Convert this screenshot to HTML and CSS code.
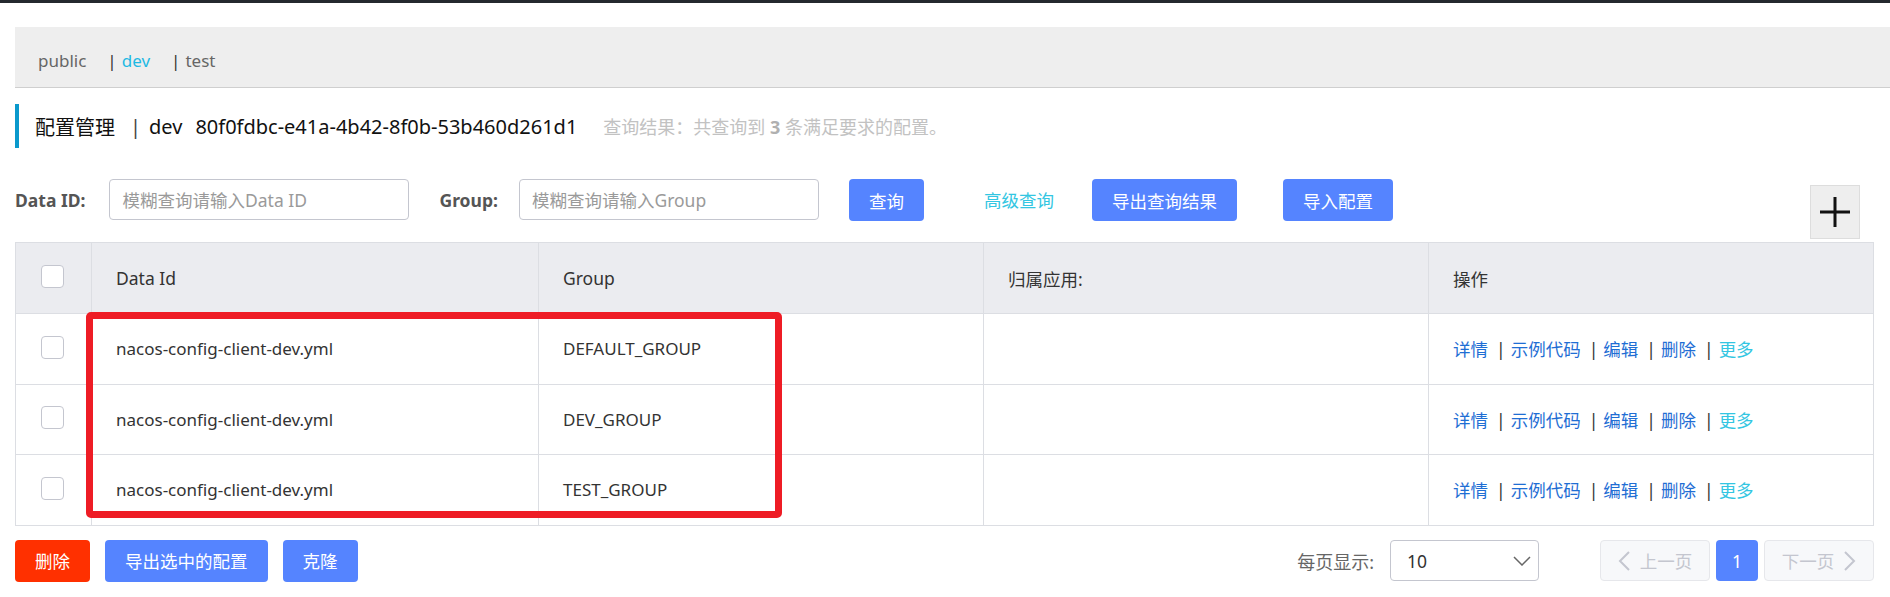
FILE: index.html
```html
<!DOCTYPE html>
<html lang="zh-CN">
<head>
<meta charset="utf-8">
<title>配置管理</title>
<link rel="stylesheet" href="styles.css">
</head>
<body>
<div class="topbar"></div>
<div class="page">
  <div class="ns-bar">
    <span class="ns">public</span>
    <span class="ns"><span class="ns-sep">|</span><span class="ns-active">dev</span></span>
    <span class="ns"><span class="ns-sep">|</span>test</span>
  </div>
  <div class="content">
    <div class="title">
      <span class="title-main">配置管理</span>
      <span class="title-sep">|</span>
      <span class="title-ns">dev</span>
      <span class="title-id">80f0fdbc-e41a-4b42-8f0b-53b460d261d1</span>
      <span class="result">查询结果：共查询到 <strong>3</strong> 条满足要求的配置。</span>
    </div>

    <div class="search">
      <div class="field">
        <label class="field-label">Data ID:</label>
        <input class="input" type="text" placeholder="模糊查询请输入Data ID">
      </div>
      <div class="field field-group">
        <label class="field-label">Group:</label>
        <input class="input" type="text" placeholder="模糊查询请输入Group">
      </div>
      <button class="btn btn-primary btn-query">查询</button>
      <a class="adv-link">高级查询</a>
      <button class="btn btn-primary btn-export">导出查询结果</button>
      <button class="btn btn-primary btn-import">导入配置</button>
      <button class="plus-btn" aria-label="新建配置">
        <svg width="30" height="30" viewBox="0 0 30 30"><path d="M0 15H30M15 0V30" stroke="#111" stroke-width="3" fill="none"/></svg>
      </button>
    </div>

    <div class="table-wrap">
      <table class="grid">
        <colgroup>
          <col class="c-check"><col class="c-id"><col class="c-group"><col class="c-app"><col>
        </colgroup>
        <thead>
          <tr>
            <th class="check-cell"><span class="checkbox"></span></th>
            <th>Data Id</th>
            <th>Group</th>
            <th>归属应用:</th>
            <th>操作</th>
          </tr>
        </thead>
        <tbody>
          <tr>
            <td class="check-cell"><span class="checkbox"></span></td>
            <td>nacos-config-client-dev.yml</td>
            <td>DEFAULT_GROUP</td>
            <td></td>
            <td class="ops"><a class="op">详情</a><span class="op-sep">|</span><a class="op">示例代码</a><span class="op-sep">|</span><a class="op">编辑</a><span class="op-sep">|</span><a class="op">删除</a><span class="op-sep">|</span><a class="op op-more">更多</a></td>
          </tr>
          <tr>
            <td class="check-cell"><span class="checkbox"></span></td>
            <td>nacos-config-client-dev.yml</td>
            <td>DEV_GROUP</td>
            <td></td>
            <td class="ops"><a class="op">详情</a><span class="op-sep">|</span><a class="op">示例代码</a><span class="op-sep">|</span><a class="op">编辑</a><span class="op-sep">|</span><a class="op">删除</a><span class="op-sep">|</span><a class="op op-more">更多</a></td>
          </tr>
          <tr>
            <td class="check-cell"><span class="checkbox"></span></td>
            <td>nacos-config-client-dev.yml</td>
            <td>TEST_GROUP</td>
            <td></td>
            <td class="ops"><a class="op">详情</a><span class="op-sep">|</span><a class="op">示例代码</a><span class="op-sep">|</span><a class="op">编辑</a><span class="op-sep">|</span><a class="op">删除</a><span class="op-sep">|</span><a class="op op-more">更多</a></td>
          </tr>
        </tbody>
      </table>
      <div class="highlight"></div>
    </div>

    <div class="footer">
      <div class="batch">
        <button class="btn btn-danger">删除</button>
        <button class="btn btn-primary">导出选中的配置</button>
        <button class="btn btn-primary">克隆</button>
      </div>
      <div class="paging">
        <span class="page-size-label">每页显示:</span>
        <div class="select">
          <span class="select-value">10</span>
          <svg class="select-arrow" width="18" height="10" viewBox="0 0 18 10"><polyline points="1,1 9,9 17,1" fill="none" stroke="#666" stroke-width="1.5"/></svg>
        </div>
        <div class="pager">
          <button class="pg pg-nav" disabled>
            <svg width="12" height="20" viewBox="0 0 12 20"><polyline points="11,1 2,10 11,19" fill="none" stroke="#c4c6cf" stroke-width="2"/></svg>
            <span>上一页</span>
          </button>
          <button class="pg pg-current">1</button>
          <button class="pg pg-nav" disabled>
            <span>下一页</span>
            <svg width="12" height="20" viewBox="0 0 12 20"><polyline points="1,1 10,10 1,19" fill="none" stroke="#c4c6cf" stroke-width="2"/></svg>
          </button>
        </div>
      </div>
    </div>
  </div>
</div>
</body>
</html>
```

FILE: styles.css
```css
* { box-sizing: border-box; }

html, body {
  margin: 0;
  padding: 0;
  background: #fff;
}

body {
  font-family: "Noto Sans", "Noto Sans CJK SC", sans-serif;
  font-size: 17.5px;
  color: #333;
  width: 1890px;
  height: 597px;
  overflow: hidden;
}

.topbar {
  height: 3px;
  background: #24292e;
}

.page {
  padding-left: 15px;
}

/* namespace bar */
.ns-bar {
  margin-top: 24px;
  background: #eeeeee;
  border-bottom: 1px solid #cfcfcf;
  padding: 22px 23px 14px;
  line-height: 24px;
  font-size: 17px;
  color: #666;
  display: flex;
}

.ns {
  margin-right: 21px;
}

.ns-sep {
  color: #333;
  margin-right: 5px;
}

.ns-active {
  color: #1fb9e3;
}

.content {
  padding-right: 16px;
}

/* title */
.title {
  margin-top: 16px;
  height: 44px;
  border-left: 4px solid #0a99cc;
  padding-left: 16px;
  display: flex;
  align-items: center;
  white-space: nowrap;
}

.title-main,
.title-sep,
.title-ns,
.title-id {
  font-size: 20px;
  color: #111;
}

.title-sep {
  margin: 0 8px 0 15px;
  color: #444;
}

.title-id {
  margin-left: 13px;
}

.result {
  margin-left: 26px;
  font-size: 18px;
  color: #c2c2c2;
}

.result strong {
  color: #b0b0b0;
}

/* search row */
.search {
  margin-top: 31px;
  display: flex;
  align-items: flex-start;
  height: 60px;
}

.field {
  display: flex;
  align-items: center;
  height: 41px;
  margin-right: 30px;
}

.field-label {
  font-weight: bold;
  color: #555;
  margin-right: 24px;
}

.field-group .field-label {
  margin-right: 21px;
}

.input {
  width: 300px;
  height: 41px;
  border: 1px solid #c4c6cf;
  border-radius: 4px;
  padding: 0 12px;
  font-family: inherit;
  font-size: 17.5px;
  color: #333;
  outline: none;
}

.input::placeholder {
  color: #9a9a9a;
}

.btn {
  height: 42px;
  padding: 0 20px;
  border: none;
  border-radius: 4px;
  font-family: inherit;
  font-size: 17.5px;
  color: #fff;
  white-space: nowrap;
}

.btn-primary {
  background: #5584ff;
}

.btn-danger {
  background: #ff3000;
}

.adv-link {
  margin-left: 60px;
  margin-right: 38px;
  line-height: 42px;
  color: #33c6e2;
}

.btn-import {
  margin-left: 46px;
}

.plus-btn {
  margin-left: auto;
  margin-right: 14px;
  margin-top: 6px;
  width: 50px;
  height: 54px;
  background: #eeeeee;
  border: 1px solid #dddddd;
  padding: 0;
  display: flex;
  align-items: center;
  justify-content: center;
}

/* table */
.table-wrap {
  position: relative;
  margin-top: 3px;
}

.grid {
  width: 100%;
  border-collapse: collapse;
  table-layout: fixed;
}

.c-check { width: 76px; }
.c-id { width: 447px; }
.c-group { width: 445px; }
.c-app { width: 445px; }

.grid th,
.grid td {
  border: 1px solid #dcdee3;
  padding: 0 24px;
  text-align: left;
  font-weight: normal;
  white-space: nowrap;
}

.grid th {
  height: 71px;
  background: #ebecf0;
  color: #333;
}

.grid td {
  height: 70.5px;
  font-size: 17px;
  color: #333;
}

.grid .check-cell {
  padding: 0 0 3px 25px;
}

.checkbox {
  display: block;
  width: 23px;
  height: 23px;
  border: 1px solid #c4c6cf;
  border-radius: 4px;
  background: #fff;
}

.grid td.ops {
  font-size: 17.5px;
}

.op {
  color: #1f6ed4;
}

.op-more {
  color: #33c6e2;
}

.op-sep {
  color: #333;
  margin: 0 5px 0 8px;
}

.highlight {
  position: absolute;
  left: 71px;
  top: 70px;
  width: 696px;
  height: 206px;
  border: 7px solid #ee1c25;
  border-radius: 5px;
}

/* footer */
.footer {
  margin-top: 14px;
  display: flex;
  justify-content: space-between;
  align-items: center;
}

.batch {
  display: flex;
  gap: 15px;
}

.paging {
  display: flex;
  align-items: center;
}

.page-size-label {
  color: #666;
  margin-right: 16px;
  font-size: 18px;
}

.select {
  width: 149px;
  height: 41px;
  border: 1px solid #c4c6cf;
  border-radius: 4px;
  display: flex;
  align-items: center;
  justify-content: space-between;
  padding: 0 7px 0 16px;
  color: #333;
}

.pager {
  display: flex;
  gap: 6px;
  margin-left: 61px;
}

.pg {
  height: 41px;
  border-radius: 4px;
  font-family: inherit;
  font-size: 17.5px;
  display: flex;
  align-items: center;
  justify-content: center;
  gap: 10px;
  padding: 0;
}

.pg-nav {
  width: 110px;
  background: #f7f8fa;
  border: 1px solid #e6e7eb;
  color: #c4c6cf;
}

.pg-current {
  width: 42px;
  background: #5584ff;
  border: none;
  color: #fff;
}
```
